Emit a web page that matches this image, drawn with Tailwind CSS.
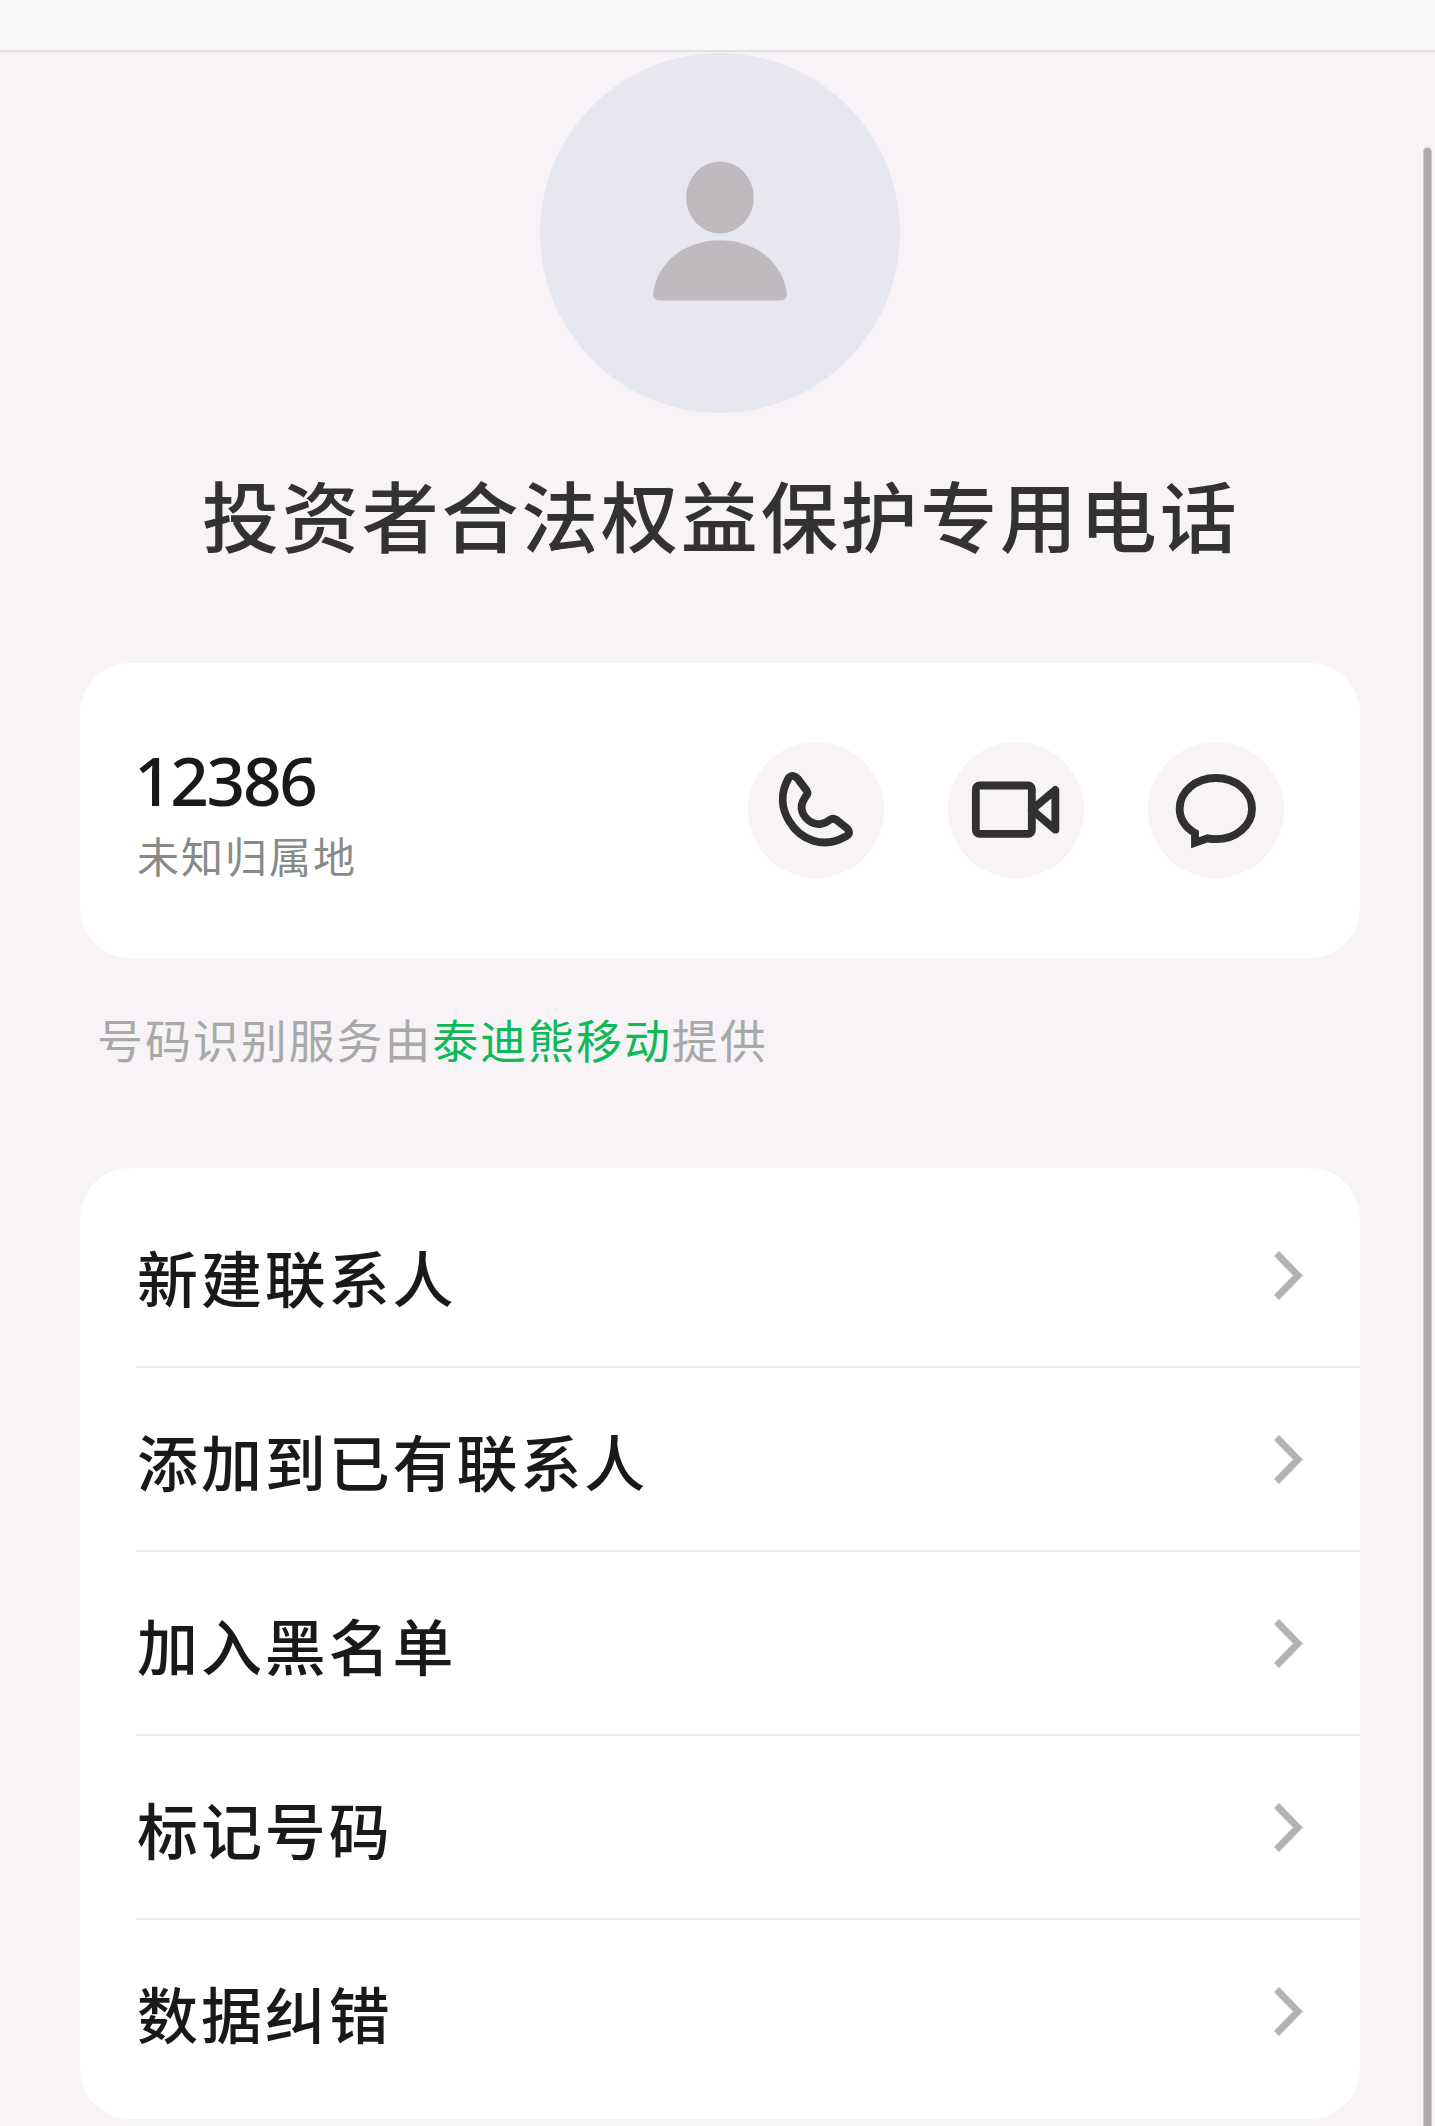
<!DOCTYPE html>
<html lang="zh-CN">
<head>
    <meta charset="UTF-8">
    <meta name="viewport" content="width=device-width, initial-scale=1.0">
    <title>联系人详情</title>
    <script src="https://cdn.jsdelivr.net/npm/@tailwindcss/browser@4"></script>
    <style>
        body {
            font-family: 'Noto Sans CJK SC', sans-serif;
        }
        .number {
            font-family: 'Noto Sans', sans-serif;
        }
    </style>
</head>
<body class="relative h-[2126px] overflow-hidden bg-[#f7f3f7]">
    <!-- Top bar -->
    <header class="h-[52px] bg-[#f7f7f7] border-b-2 border-[#e1dfe1]"></header>

    <main class="w-[1279.5px] ml-20">
        <!-- Avatar -->
        <div class="flex flex-col items-center">
            <div class="w-[360px] h-[360px] mt-[0.5px] rounded-full bg-[#e6e7ef]">
                <svg class="w-full h-full" viewBox="0 0 360 360" fill="#bfbabe">
                    <ellipse cx="180" cy="144.5" rx="33.8" ry="36"/>
                    <path d="M180 187.3C216 187.3 243 210 247 240.500Q247 247.500 240.500 247.500H119.500Q113 247.500 113 240.500C117 210 144 187.300 180 187.300Z"/>
                </svg>
            </div>
            <h1 class="mt-[43px] pl-[2px] text-[77px] leading-[116px] tracking-[2.8px] font-medium text-[#323232] whitespace-nowrap">投资者合法权益保护专用电话</h1>
        </div>

        <!-- Number card -->
        <section class="mt-[91px] h-[295.5px] rounded-[50px] bg-white flex items-center justify-between pl-[57px] pr-[76px]">
            <div class="pt-[9px]">
                <p class="number -ml-[3px] text-[67.5px] leading-[72px] tracking-[-2.3px] font-medium text-[#191919]">12386</p>
                <p class="mt-[9px] text-[42px] leading-[60px] tracking-[2px] text-[#888a88]">未知归属地</p>
            </div>
            <div class="flex gap-16">
                <button class="w-[136px] h-[136px] rounded-full bg-[#f7f3f7]" aria-label="拨打电话">
                    <svg class="w-full h-full" viewBox="54 68 408 408" fill="none" stroke="#303030" stroke-width="23.500" stroke-linejoin="round">
                        <path d="M176 176C150 222 154 268 178 306C212 362 280 390 346 352Q366 342 350 326L318 301Q309 295 300 301C286 313 262 320 243 308C216 292 207 264 222 240Q226 232 231 226Q234 221 230 214L203 178Q188 162 176 176Z"/>
                    </svg>
                </button>
                <button class="w-[136px] h-[136px] rounded-full bg-[#f7f3f7]" aria-label="视频通话">
                    <svg class="w-full h-full" viewBox="54 68 408 408" fill="none" stroke="#303030" stroke-width="23.500" stroke-linejoin="round">
                        <rect x="137.500" y="198.500" width="168" height="145" rx="11"/>
                        <path d="M305.500 271.500L376 212V331Z"/>
                    </svg>
                </button>
                <button class="w-[136px] h-[136px] rounded-full bg-[#f7f3f7]" aria-label="发送信息">
                    <svg class="w-full h-full" viewBox="54 307 408 408" fill="none" stroke="#303030" stroke-width="23.500">
                        <path d="M195 580V609L233 596Q245 598.500 258 598.500C318 598.500 366 557 366 507C366 456 318 415 258 415C197 415 149 456 149 507C149 536 165 562 195 580Z"/>
                    </svg>
                </button>
            </div>
        </section>

        <p class="mt-[45.500px] pl-[17px] text-[46px] leading-[68px] tracking-[1.9px] text-[#a7a9a7]">号码识别服务由<a class="text-[#0dba55]">泰迪熊移动</a>提供</p>

        <!-- Actions -->
        <ul class="mt-[96.500px] pt-4 pb-[15px] pl-14 rounded-[50px] bg-white text-[61px] tracking-[2.9px] font-medium text-[#191919]">
            <li class="h-[184px] pr-[57px] border-b-2 border-[#eeeeee] flex items-center justify-between">
                <span class="pl-px pt-1">新建联系人</span>
                <svg class="w-[29px] h-[49px]" viewBox="0 0 29 49" fill="none" stroke="#b5b2b5" stroke-width="7"><path d="M2.500 2.500L24 24.500L2.500 46.500"/></svg>
            </li>
            <li class="h-[184px] pr-[57px] border-b-2 border-[#eeeeee] flex items-center justify-between">
                <span class="pl-px pt-1">添加到已有联系人</span>
                <svg class="w-[29px] h-[49px]" viewBox="0 0 29 49" fill="none" stroke="#b5b2b5" stroke-width="7"><path d="M2.500 2.500L24 24.500L2.500 46.500"/></svg>
            </li>
            <li class="h-[184px] pr-[57px] border-b-2 border-[#eeeeee] flex items-center justify-between">
                <span class="pl-px pt-1">加入黑名单</span>
                <svg class="w-[29px] h-[49px]" viewBox="0 0 29 49" fill="none" stroke="#b5b2b5" stroke-width="7"><path d="M2.500 2.500L24 24.500L2.500 46.500"/></svg>
            </li>
            <li class="h-[184px] pr-[57px] border-b-2 border-[#eeeeee] flex items-center justify-between">
                <span class="pl-px pt-1">标记号码</span>
                <svg class="w-[29px] h-[49px]" viewBox="0 0 29 49" fill="none" stroke="#b5b2b5" stroke-width="7"><path d="M2.500 2.500L24 24.500L2.500 46.500"/></svg>
            </li>
            <li class="h-[184px] pr-[57px] pb-0.5 flex items-center justify-between">
                <span class="pl-px pt-1">数据纠错</span>
                <svg class="w-[29px] h-[49px]" viewBox="0 0 29 49" fill="none" stroke="#b5b2b5" stroke-width="7"><path d="M2.500 2.500L24 24.500L2.500 46.500"/></svg>
            </li>
        </ul>
    </main>

    <!-- Scrollbar thumb -->
    <div class="absolute top-[147px] -bottom-4 right-[3px] w-[9px] rounded-full bg-[#acaaac] border border-[#d0ccd0]"></div>
</body>
</html>
